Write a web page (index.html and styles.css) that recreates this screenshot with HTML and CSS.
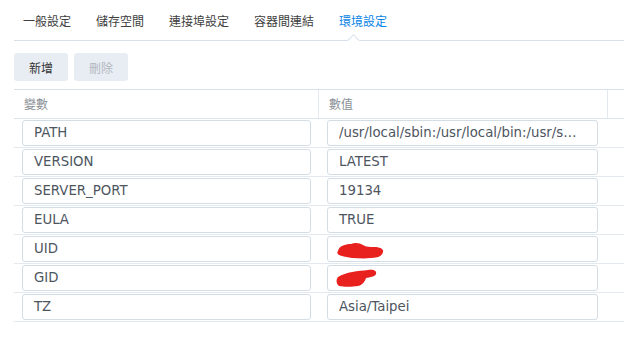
FILE: index.html
```html
<!DOCTYPE html>
<html lang="zh-Hant">
  <head>
    <meta charset="UTF-8" />
    <meta name="viewport" content="width=device-width, initial-scale=1.0" />
    <title>環境設定</title>
    <link rel="stylesheet" href="styles.css">
  </head>
  <body>
    <div class="panel">
      <ul class="tabs">
        <li>一般設定</li>
        <li>儲存空間</li>
        <li>連接埠設定</li>
        <li>容器間連結</li>
        <li class="active">環境設定</li>
      </ul>
      <div class="toolbar">
        <button class="btn">新增</button>
        <button class="btn" disabled>刪除</button>
      </div>
      <div class="grid">
        <div class="head">
          <div class="col key">變數</div>
          <div class="col val">數值</div>
          <div class="col rest"></div>
        </div>
        <div class="row">
          <div class="col key"><div class="field">PATH</div></div>
          <div class="col val"><div class="field">/usr/local/sbin:/usr/local/bin:/usr/sbin:/usr/bin:/sbin:/bin</div></div>
        </div>
        <div class="row">
          <div class="col key"><div class="field">VERSION</div></div>
          <div class="col val"><div class="field">LATEST</div></div>
        </div>
        <div class="row">
          <div class="col key"><div class="field">SERVER_PORT</div></div>
          <div class="col val"><div class="field">19134</div></div>
        </div>
        <div class="row">
          <div class="col key"><div class="field">EULA</div></div>
          <div class="col val"><div class="field">TRUE</div></div>
        </div>
        <div class="row">
          <div class="col key"><div class="field">UID</div></div>
          <div class="col val">
            <div class="field">
              <svg class="scribble" width="52" height="22" viewBox="0 0 52 22">
                <path d="M3 11 L8 10" stroke="#444" stroke-width="1.6"/>
                <path d="M2 12 C3 7 9 5 15 5 C19 3 24 4 27 6 C30 8 34 8 38 8 C44 8 48 10 47 13 C46 18 40 19 34 19 C28 20 22 19 16 19 C10 18 5 17 3 16 C1 15 1 13 2 12 Z" fill="#e8211f"/>
              </svg>
            </div>
          </div>
        </div>
        <div class="row">
          <div class="col key"><div class="field">GID</div></div>
          <div class="col val">
            <div class="field">
              <svg class="scribble" width="52" height="22" viewBox="0 0 52 22">
                <path d="M2 9 C10 4 22 3 32 2 C38 1 41 3 40 6 C39 9 34 9 30 10 C29 13 27 17 22 18 C16 19 8 19 3 18 C0 16 0 11 2 9 Z" fill="#e8211f"/>
              </svg>
            </div>
          </div>
        </div>
        <div class="row">
          <div class="col key"><div class="field">TZ</div></div>
          <div class="col val"><div class="field">Asia/Taipei</div></div>
        </div>
      </div>
    </div>
  </body>
</html>
```

FILE: styles.css
```css
* {
  margin: 0;
  padding: 0;
  box-sizing: border-box;
}
body {
  background: #fff;
  overflow: hidden;
  font-family: "DejaVu Sans", "Noto Sans CJK TC", sans-serif;
  color: #333;
}
.panel {
  padding-left: 14px;
  width: 640px;
}
.tabs {
  list-style: none;
  display: flex;
  height: 41px;
  border-bottom: 1px solid #d6e1eb;
}
.tabs li {
  position: relative;
  padding: 13px 12px 0 9px;
  margin-right: 4px;
  font-family: "Noto Sans CJK TC", sans-serif;
  font-size: 12px;
  line-height: 16px;
  color: #404040;
}
.tabs li.active {
  color: #0a84e6;
}
.tabs li.active::after {
  content: "";
  position: absolute;
  left: 19px;
  bottom: -5px;
  width: 8px;
  height: 8px;
  background: #fff;
  border-top: 1px solid #d6e1eb;
  border-left: 1px solid #d6e1eb;
  transform: rotate(45deg);
}
.toolbar {
  display: flex;
  gap: 6px;
  margin-top: 12px;
}
.btn {
  width: 54px;
  height: 28px;
  border: none;
  border-radius: 3px;
  background: #e8edf4;
  font-family: "Noto Sans CJK TC", sans-serif;
  font-size: 12px;
  color: #333;
}
.btn:disabled {
  color: #b3b8be;
}
.grid {
  margin-top: 8px;
  border-top: 1px solid #d6e1eb;
}
.head,
.row {
  display: flex;
  border-bottom: 1px solid #e3e9ef;
}
.head {
  height: 29px;
  border-bottom-color: #dde5ec;
}
.head .col {
  font-family: "Noto Sans CJK TC", sans-serif;
  font-size: 12px;
  color: #8a9096;
  line-height: 28px;
  padding-left: 10px;
}
.col.key {
  width: 305px;
}
.col.val {
  width: 289px;
}
.head .col.key,
.head .col.val {
  border-right: 1px solid #e3e9ef;
}
.col.rest {
  flex: 1;
}
.row {
  height: 29px;
}
.row .col {
  padding: 1px 0 0 8px;
}
.row .col.key {
  padding-right: 8px;
}
.row .col.val {
  padding-right: 10px;
}
.row .col.val .field {
  padding-right: 14px;
}
.field {
  position: relative;
  height: 26px;
  border: 1px solid #d3dde6;
  border-radius: 3px;
  padding: 0 11px;
  font-size: 13.3px;
  line-height: 24px;
  color: #4d5560;
  white-space: nowrap;
  overflow: hidden;
  text-overflow: ellipsis;
}
.scribble {
  position: absolute;
  left: 8px;
  top: 2px;
}
```
